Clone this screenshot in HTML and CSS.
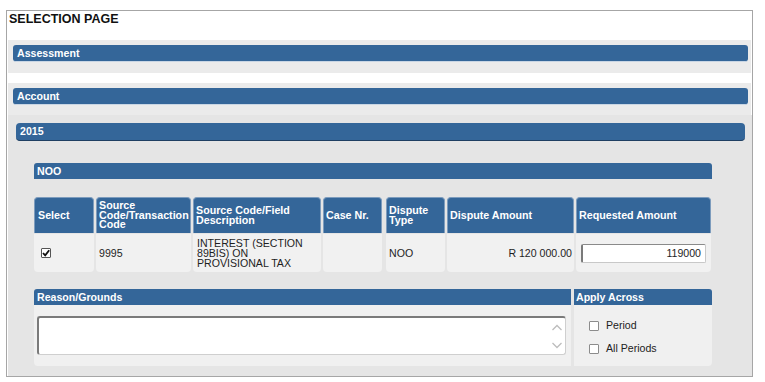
FILE: index.html
```html
<!DOCTYPE html>
<html>
<head>
<meta charset="utf-8">
<link rel="stylesheet" href="styles.css">
</head>
<body>
<div class="frame">
  <h1 class="title">SELECTION PAGE</h1>
  <section class="panel panel-light">
    <div class="bar">Assessment</div>
  </section>
  <section class="panel panel-light panel-account">
    <div class="bar">Account</div>
  </section>
  <section class="panel panel-year">
    <div class="bar bar-year">2015</div>
    <div class="content">
      <div class="bar bar-sub">NOO</div>
      <div class="grid">
        <div class="th">Select</div>
        <div class="th">Source Code/Transaction Code</div>
        <div class="th">Source Code/Field Description</div>
        <div class="th">Case Nr.</div>
        <div class="th">Dispute Type</div>
        <div class="th">Dispute Amount</div>
        <div class="th">Requested Amount</div>

        <div class="td td-check"><span class="box checked"><svg viewBox="0 0 10 10" width="10" height="10"><path d="M2 5 L4.2 7.4 L8.2 2.2" fill="none" stroke="#111" stroke-width="1.8"/></svg></span></div>
        <div class="td">9995</div>
        <div class="td td-desc">INTEREST (SECTION 89BIS) ON PROVISIONAL TAX</div>
        <div class="td"></div>
        <div class="td">NOO</div>
        <div class="td td-amount">R 120 000.00</div>
        <div class="td td-input"><div class="input">119000</div></div>
      </div>
      <div class="reason-grid">
        <div class="bar bar-flat">Reason/Grounds</div>
        <div class="bar bar-flat bar-apply">Apply Across</div>
        <div class="reason-body">
          <div class="textarea">
            <svg class="scroll" viewBox="0 0 12 34" width="12" height="34"><path d="M1.5 11 L6 6.5 L10.5 11" fill="none" stroke="#bdbdbd" stroke-width="1.3"/><path d="M1.5 24 L6 28.5 L10.5 24" fill="none" stroke="#bdbdbd" stroke-width="1.3"/></svg>
          </div>
        </div>
        <div class="apply-body">
          <label class="opt"><span class="box"></span>Period</label>
          <label class="opt"><span class="box"></span>All Periods</label>
        </div>
      </div>
    </div>
  </section>
</div>
</body>
</html>
```
FILE: styles.css
```css
html, body {
  margin: 0;
  padding: 0;
  background: #ffffff;
}

body {
  font-family: "Liberation Sans", Arial, sans-serif;
  color: #1e1e1e;
}

.frame {
  margin: 10px 0 0 6px;
  width: 745px;
  height: 365px;
  border: 1px solid #a6a6a6;
  display: flex;
  flex-direction: column;
}

.title {
  margin: 0;
  height: 29px;
  box-sizing: border-box;
  padding: 1px 0 0 2px;
  font-size: 12.5px;
  line-height: 15px;
  font-weight: bold;
  color: #111;
}

.panel {
  margin-left: 1px;
  box-sizing: border-box;
}

.panel-light {
  width: 743px;
  height: 33px;
  background: #ebebeb;
  padding: 5px 3px 0 5px;
}

.panel-account {
  margin-top: 10px;
  height: 32px;
}

.bar {
  height: 16px;
  background: #346699;
  color: #fff;
  font-weight: bold;
  font-size: 10.6px;
  line-height: 16px;
  padding-left: 4px;
  border-radius: 3px;
  border-bottom: 1px solid #c9d6e4;
}

.panel-year {
  flex: 1;
  width: 744px;
  background: #e5e5e5;
  padding: 8px 0 0 8px;
}

.bar-year {
  width: 729px;
  box-sizing: border-box;
  height: 18px;
  line-height: 17px;
  border-radius: 4px;
  border-bottom: 1px solid #1f3f62;
}

.content {
  margin: 22px 0 0 18px;
  width: 678px;
}

.bar-sub {
  border-bottom: none;
  border-radius: 3px 3px 0 0;
  padding-left: 3px;
}

.grid {
  margin-top: 18px;
  display: grid;
  grid-template-columns: 60px 95px 128px 60px 60px 127px 135px;
  grid-template-rows: 36px 38px;
  column-gap: 2px;
  row-gap: 1px;
  font-size: 10.6px;
}

.grid > :nth-child(7n+4) { margin-right: 1px; }
.grid > :nth-child(7n+5) { margin-left: 1px; }

.th {
  background: #346699;
  color: #fff;
  font-weight: bold;
  font-size: 10.7px;
  line-height: 9.6px;
  padding: 0 1px 0 2px;
  display: flex;
  align-items: center;
  border: 1px solid #7d9cbd;
  border-bottom: none;
  border-radius: 4px 4px 0 0;
}

.grid > .th:first-child {
  padding-left: 3px;
}

.td {
  background: #f1f1f1;
  display: flex;
  align-items: center;
  padding: 0 3px 0 3px;
  line-height: 10px;
  border-radius: 0 0 4px 4px;
}

.td-check {
  padding-left: 7px;
}

.td-desc {
  padding-left: 4px;
}

.td-amount {
  justify-content: flex-end;
  padding-right: 2px;
}

.td-input {
  padding: 0 5px 0 5px;
}

.input {
  width: 100%;
  height: 19px;
  box-sizing: border-box;
  background: #fff;
  border: 1px solid #c8c8c8;
  border-top-color: #8a8a8a;
  border-left: 2px solid #7a7a7a;
  border-radius: 2px;
  text-align: right;
  line-height: 17px;
  padding-right: 4px;
}

.box {
  display: inline-block;
  width: 10px;
  height: 10px;
  box-sizing: border-box;
  border: 1px solid #8c8c8c;
  background: #fff;
  border-radius: 1px;
  position: relative;
}

.box.checked {
  border-color: #555;
}

.box svg {
  position: absolute;
  left: -1px;
  top: -1px;
}

.reason-grid {
  margin-top: 17px;
  display: grid;
  grid-template-columns: 537px 138px;
  grid-template-rows: 16px 61px;
  column-gap: 3px;
}

.bar-flat {
  border-bottom: none;
  border-radius: 3px 0 0 0;
  padding-left: 3px;
}

.bar-apply {
  border-radius: 0 3px 0 0;
  padding-left: 2px;
}

.reason-body {
  background: #f0f0f0;
  padding: 11px 5px 0 3px;
  border-radius: 0 0 0 4px;
}

.textarea {
  height: 39px;
  box-sizing: border-box;
  background: #fff;
  border: 1px solid #cfcfcf;
  border-top: 2px solid #7a7a7a;
  border-left: 2px solid #7a7a7a;
  border-radius: 3px;
  position: relative;
}

.scroll {
  position: absolute;
  right: 2px;
  top: 1px;
}

.apply-body {
  background: #f0f0f0;
  border-radius: 0 0 4px 0;
  padding: 15px 0 0 15px;
  display: flex;
  flex-direction: column;
  gap: 12px;
  font-size: 10.6px;
}

.opt {
  display: flex;
  align-items: center;
  gap: 7px;
  line-height: 11px;
  color: #222;
}
```
